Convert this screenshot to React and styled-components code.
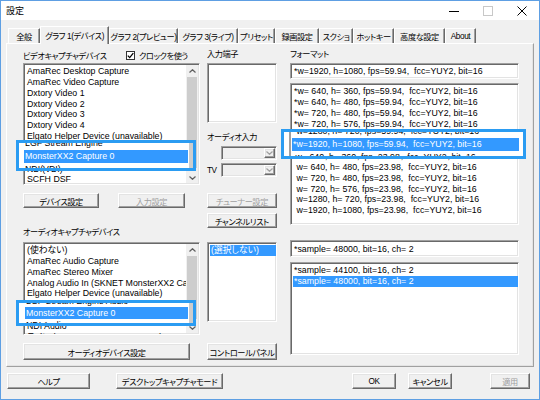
import React from "react"
import styled, { createGlobalStyle, css } from "styled-components"

const GlobalStyle = createGlobalStyle`
  html, body {
    margin: 0;
    padding: 0;
    background: #f0f0f0;
  }
  body {
    font-family: "Liberation Sans", "Noto Sans CJK JP", sans-serif;
    font-size: 8.8px;
    font-feature-settings: "palt";
    color: #000;
  }
  * {
    box-sizing: border-box;
  }
`

// Japanese UI captions are narrower than Noto's kana, so tighten them
const jp = css`
  font-size: 8.2px;
  letter-spacing: -0.4px;
`

const sunken = css`
  border: 1px solid;
  border-color: #a0a0a0 #ffffff #ffffff #a0a0a0;
  box-shadow: inset 1px 1px 0 #696969, inset -1px -1px 0 #e3e3e3;
`

const raised = css`
  border: 1px solid;
  border-color: #ffffff #696969 #696969 #ffffff;
  box-shadow: inset -1px -1px 0 #a0a0a0, inset 1px 1px 0 #e3e3e3;
  background: #f0f0f0;
`

const Window = styled.div`
  width: 540px;
  height: 400px;
  border: 1px solid #5e9fe3;
  background: #f0f0f0;
  display: flex;
  flex-direction: column;
  overflow: hidden;
`

const TitleBar = styled.div`
  height: 19px;
  flex: none;
  background: #fff;
  display: flex;
  align-items: center;
  padding-left: 5px;
`

const TitleText = styled.span`
  font-size: 9px;
`

const WinButtons = styled.div`
  margin-left: auto;
  display: flex;
  height: 100%;
`

const WinButton = styled.div`
  width: 34px;
  height: 100%;
  display: flex;
  align-items: center;
  justify-content: center;
`

const Body = styled.div`
  flex: 1;
  display: flex;
  flex-direction: column;
  padding-top: 6px;
`

const TabStrip = styled.div`
  height: 18px;
  margin-bottom: -1px;
  padding-left: 7px;
  display: flex;
  align-items: flex-end;
  position: relative;
  z-index: 1;
`

const Tab = styled.div`
  ${jp};
  width: ${(p) => p.$w}px;
  height: ${(p) => (p.$active ? 18 : 15)}px;
  margin-bottom: ${(p) => (p.$active ? 0 : 1)}px;
  padding-bottom: ${(p) => (p.$active ? 2 : 0)}px;
  display: flex;
  align-items: center;
  justify-content: center;
  white-space: nowrap;
  background: #f0f0f0;
  border-top: 1px solid #fff;
  border-left: 1px solid #fff;
  border-right: 1px solid #696969;
  box-shadow: inset -1px 0 0 #a0a0a0;
`

const Panel = styled.div`
  height: 324px;
  flex: none;
  margin: 0 5px;
  border: 1px solid;
  border-color: #fff #a0a0a0 #a0a0a0 #fff;
  box-shadow: inset -1px -1px 0 #e3e3e3;
  display: flex;
  padding: 5px 0 0 16px;
`

const Column = styled.div`
  width: ${(p) => p.$w}px;
  margin-left: ${(p) => p.$gap || 0}px;
  display: flex;
  flex-direction: column;
`

const Label = styled.div`
  ${jp};
  height: 12px;
  line-height: 12px;
  white-space: nowrap;
  margin-top: ${(p) => p.$mt || 0}px;
`

const LabelRow = styled.div`
  ${jp};
  height: 12px;
  display: grid;
  grid-template-columns: 103px auto;
  align-items: center;
  white-space: nowrap;
`

const CheckGroup = styled.div`
  display: flex;
  align-items: center;
  gap: 4px;
`

const CheckBox = styled.div`
  width: 9px;
  height: 9px;
  border: 1px solid #333;
  background: #fff;
  display: flex;
  align-items: center;
  justify-content: center;
`

const ListBox = styled.div`
  ${sunken};
  position: relative;
  height: ${(p) => p.$h}px;
  margin-top: ${(p) => p.$mt || 0}px;
  background: #fff;
  display: flex;
  flex: none;
`

const Rows = styled.div`
  flex: 1;
  min-width: 0;
  overflow: hidden;
  padding: 2px 0 0 2px;
`

const Row = styled.div`
  height: 10.85px;
  line-height: 10.85px;
  padding-left: 1px;
  white-space: pre;
  overflow: hidden;
  background: ${(p) => (p.$selected ? "#3399ff" : "transparent")};
  color: ${(p) => (p.$selected ? "#fff" : "#000")};
`

const Scrollbar = styled.div`
  width: 12px;
  margin: 1px 1px 1px 0;
  background: #f0f0f0;
  display: flex;
  flex-direction: column;
`

const ScrollArrow = styled.div`
  height: 11px;
  flex: none;
  display: flex;
  align-items: center;
  justify-content: center;
  margin-top: ${(p) => (p.$bottom ? "auto" : "0")};
`

const Thumb = styled.div`
  height: ${(p) => p.$h}px;
  margin: 1px 1px 0;
  background: #cdcdcd;
`

const EditBox = styled.div`
  ${sunken};
  height: ${(p) => p.$h}px;
  margin-top: ${(p) => p.$mt || 0}px;
  background: #fff;
  padding-left: 3px;
  display: flex;
  align-items: center;
  white-space: pre;
`

const Button = styled.div`
  ${raised};
  ${jp};
  width: ${(p) => p.$w}px;
  height: ${(p) => p.$h || 15}px;
  margin-top: ${(p) => p.$mt || 0}px;
  margin-left: ${(p) => p.$ml || 0}px;
  flex: none;
  display: flex;
  align-items: center;
  justify-content: center;
  white-space: nowrap;
  color: ${(p) => (p.$disabled ? "#a0a0a0" : "#000")};
`

const ButtonRow = styled.div`
  display: flex;
  gap: 19px;
  margin-top: 8px;
`

const Combo = styled.div`
  ${sunken};
  width: 56px;
  height: 14px;
  margin-left: ${(p) => p.$ml || 0}px;
  margin-top: ${(p) => p.$mt || 0}px;
  background: #f0f0f0;
  display: flex;
  justify-content: flex-end;
  padding: 1px;
`

const ComboDrop = styled.div`
  ${raised};
  width: 11px;
  height: 100%;
  display: flex;
  align-items: center;
  justify-content: center;
`

const TvRow = styled.div`
  display: flex;
  align-items: center;
  margin-top: 3px;
`

const TvLabel = styled.span`
  ${jp};
  width: 14px;
`

const CalloutFrame = styled.div`
  position: absolute;
  left: ${(p) => p.$x}px;
  top: ${(p) => p.$y}px;
  width: ${(p) => p.$w}px;
  height: ${(p) => p.$h}px;
  border: 3px solid #2b9cf2;
  background: #fff;
  overflow: hidden;
  display: flex;
  z-index: 2;
`

const CalloutRows = styled.div`
  flex: 1;
  min-width: 0;
  margin-top: ${(p) => p.$shift}px;
  margin-left: ${(p) => p.$ml || 0}px;
  padding-left: ${(p) => p.$pad}px;
  padding-right: ${(p) => p.$pr || 0}px;
  border-left: ${(p) => (p.$edge ? "2px solid #a0a0a0" : "none")};
`

const CalloutRow = styled.div`
  height: ${(p) => p.$h}px;
  line-height: ${(p) => p.$h}px;
  padding-left: 1px;
  white-space: pre;
  overflow: hidden;
  background: ${(p) => (p.$selected ? "#3399ff" : "transparent")};
  color: ${(p) => (p.$selected ? "#fff" : "#000")};
`

const CalloutBar = styled.div`
  width: 4px;
  margin-left: 1px;
  background: #cdcdcd;
`

const Footer = styled.div`
  display: flex;
  margin-top: 6px;
  padding: 0 9px 0 6px;
`

const Spacer = styled.div`
  flex: 1;
`

const Chevron = ({ down }) => (
  <svg width="7" height="4" viewBox="0 0 7 4">
    <path
      d={down ? "M0.5 0.5 L3.5 3.3 L6.5 0.5" : "M0.5 3.5 L3.5 0.7 L6.5 3.5"}
      fill="none"
      stroke="#606060"
      strokeWidth="1.2"
    />
  </svg>
)

const DropArrow = () => (
  <svg width="7" height="4" viewBox="0 0 7 4">
    <path d="M0.5 0.5 L3.5 3.3 L6.5 0.5" fill="none" stroke="#a0a0a0" strokeWidth="1.2" />
  </svg>
)

const VScroll = ({ thumb }) => (
  <Scrollbar>
    <ScrollArrow>
      <Chevron />
    </ScrollArrow>
    <Thumb $h={thumb} />
    <ScrollArrow $bottom>
      <Chevron down />
    </ScrollArrow>
  </Scrollbar>
)

const Callout = ({ x, y, w, h, shift, rowH, pad, pr, ml, edge, bar, rows, selected }) => (
  <CalloutFrame $x={x} $y={y} $w={w} $h={h}>
    <CalloutRows $shift={shift} $pad={pad} $pr={pr} $ml={ml} $edge={edge}>
      {rows.map((r, i) => (
        <CalloutRow key={i} $h={rowH} $selected={i === selected}>
          {r}
        </CalloutRow>
      ))}
    </CalloutRows>
    {bar && <CalloutBar />}
  </CalloutFrame>
)

const tabs = [
  { label: "全般", w: 32 },
  { label: "グラフ 1(デバイス)", w: 69, active: true },
  { label: "グラフ 2(プレビュー)", w: 69 },
  { label: "グラフ 3(ライブ)", w: 60 },
  { label: "プリセット", w: 37 },
  { label: "録画設定", w: 44 },
  { label: "スクショ", w: 34 },
  { label: "ホットキー", w: 41 },
  { label: "高度な設定", w: 51 },
  { label: "About", w: 31 },
]

const videoDevices = [
  "AmaRec Desktop Capture",
  "AmaRec Video Capture",
  "Dxtory Video 1",
  "Dxtory Video 2",
  "Dxtory Video 3",
  "Dxtory Video 4",
  "Elgato Helper Device (unavailable)",
  "LGF Stream Engine",
  "MonsterXX2 Capture 0",
  "NDI(VDI)",
  "SCFH DSF",
]

const audioDevices = [
  "(使わない)",
  "AmaRec Audio Capture",
  "AmaRec Stereo Mixer",
  "Analog Audio In (SKNET MonsterXX2 Capture 0)",
  "Elgato Helper Device (unavailable)",
  "LGF Stream Engine Audio",
  "MonsterXX2 Capture 0",
  "NDI Audio",
  "ライン (4- Game Capture HD 60 S)",
]

const videoFormats = [
  "*w= 640, h= 360, fps=59.94,  fcc=YUY2, bit=16",
  "*w= 640, h= 480, fps=59.94,  fcc=YUY2, bit=16",
  "*w= 720, h= 480, fps=59.94,  fcc=YUY2, bit=16",
  "*w= 720, h= 576, fps=59.94,  fcc=YUY2, bit=16",
  "*w=1280, h= 720, fps=59.94,  fcc=YUY2, bit=16",
  "*w=1920, h=1080, fps=59.94,  fcc=YUY2, bit=16",
  " w= 640, h= 360, fps=23.98,  fcc=YUY2, bit=16",
  " w= 640, h= 480, fps=23.98,  fcc=YUY2, bit=16",
  " w= 720, h= 480, fps=23.98,  fcc=YUY2, bit=16",
  " w= 720, h= 576, fps=23.98,  fcc=YUY2, bit=16",
  " w=1280, h= 720, fps=23.98,  fcc=YUY2, bit=16",
  " w=1920, h=1080, fps=23.98,  fcc=YUY2, bit=16",
]

const audioFormats = ["*sample= 44100, bit=16, ch= 2", "*sample= 48000, bit=16, ch= 2"]

const App = () => (
  <>
    <GlobalStyle />
    <Window>
      <TitleBar>
        <TitleText>設定</TitleText>
        <WinButtons>
          <WinButton>
            <svg width="10" height="10" viewBox="0 0 10 10">
              <path d="M0 5.5 H10" stroke="#000" strokeWidth="1" />
            </svg>
          </WinButton>
          <WinButton>
            <svg width="10" height="10" viewBox="0 0 10 10">
              <rect x="0.5" y="0.5" width="9" height="9" fill="none" stroke="#c8c8c8" />
            </svg>
          </WinButton>
          <WinButton>
            <svg width="10" height="10" viewBox="0 0 10 10">
              <path d="M0.5 0.5 L9.5 9.5 M9.5 0.5 L0.5 9.5" stroke="#000" strokeWidth="1" />
            </svg>
          </WinButton>
        </WinButtons>
      </TitleBar>
      <Body>
        <TabStrip>
          {tabs.map((t) => (
            <Tab key={t.label} $w={t.w} $active={t.active}>
              {t.label}
            </Tab>
          ))}
        </TabStrip>
        <Panel>
          <Column $w={177}>
            <LabelRow>
              <span>ビデオキャプチャデバイス</span>
              <CheckGroup>
                <CheckBox>
                  <svg width="7" height="7" viewBox="0 0 7 7">
                    <path d="M0.8 3.6 L2.7 5.6 L6.3 1.2" fill="none" stroke="#000" strokeWidth="1.3" />
                  </svg>
                </CheckBox>
                クロックを使う
              </CheckGroup>
            </LabelRow>
            <ListBox $h={122} $mt={2}>
              <Rows>
                {videoDevices.map((d, i) => (
                  <Row key={d} $selected={i === 8}>
                    {d}
                  </Row>
                ))}
              </Rows>
              <VScroll thumb={91} />
              <Callout
                x={-8}
                y={76}
                w={180}
                h={31}
                shift={-6}
                rowH={13}
                pad={5}
                bar
                rows={["LGF Stream Engine", "MonsterXX2 Capture 0", "NDI(VDI)"]}
                selected={1}
              />
            </ListBox>
            <ButtonRow>
              <Button $w={76}>デバイス設定</Button>
              <Button $w={67} $disabled>
                入力設定
              </Button>
            </ButtonRow>
            <Label $mt={19}>オーディオキャプチャデバイス</Label>
            <ListBox $h={93} $mt={3}>
              <Rows>
                {audioDevices.map((d, i) => (
                  <Row key={d} $selected={i === 6}>
                    {d}
                  </Row>
                ))}
              </Rows>
              <VScroll thumb={63} />
              <Callout
                x={-8}
                y={57}
                w={180}
                h={26}
                shift={-8}
                rowH={12}
                pad={6}
                bar
                rows={["LGF Stream Engine Audio", "MonsterXX2 Capture 0", "NDI Audio"]}
                selected={1}
              />
            </ListBox>
            <Button $w={167} $h={17} $mt={8}>
              オーディオデバイス設定
            </Button>
          </Column>

          <Column $w={70} $gap={7}>
            <Label>入力端子</Label>
            <ListBox $h={60} $mt={2} />
            <Label $mt={9}>オーディオ入力</Label>
            <Combo $ml={14} $mt={2}>
              <ComboDrop>
                <DropArrow />
              </ComboDrop>
            </Combo>
            <TvRow>
              <TvLabel>TV</TvLabel>
              <Combo>
                <ComboDrop>
                  <DropArrow />
                </ComboDrop>
              </Combo>
            </TvRow>
            <Button $w={70} $mt={16} $disabled>
              チューナー設定
            </Button>
            <Button $w={70} $mt={5}>
              チャンネルリスト
            </Button>
            <ListBox $h={80} $mt={14}>
              <Rows>
                <Row $selected>(選択しない)</Row>
              </Rows>
            </ListBox>
            <Button $w={70} $h={17} $mt={21}>
              コントロールパネル
            </Button>
          </Column>

          <Column $w={229} $gap={13}>
            <Label>フォーマット</Label>
            <EditBox $h={16} $mt={2}>
              *w=1920, h=1080, fps=59.94,  fcc=YUY2, bit=16
            </EditBox>
            <ListBox $h={142} $mt={4}>
              <Rows>
                {videoFormats.map((f, i) => (
                  <Row key={f} $selected={i === 5}>
                    {f}
                  </Row>
                ))}
              </Rows>
              <Callout
                x={-10}
                y={45}
                w={245}
                h={30}
                shift={-7}
                rowH={13}
                ml={5}
                pad={1}
                pr={4}
                edge
                rows={[videoFormats[4], videoFormats[5], videoFormats[6]]}
                selected={1}
              />
            </ListBox>
            <EditBox $h={17} $mt={15}>
              *sample= 48000, bit=16, ch= 2
            </EditBox>
            <ListBox $h={93} $mt={5}>
              <Rows>
                {audioFormats.map((f, i) => (
                  <Row key={f} $selected={i === 1}>
                    {f}
                  </Row>
                ))}
              </Rows>
            </ListBox>
          </Column>
        </Panel>
        <Footer>
          <Button $w={83} $h={16}>
            ヘルプ
          </Button>
          <Button $w={107} $h={16} $ml={26}>
            デスクトップキャプチャモード
          </Button>
          <Spacer />
          <Button $w={44} $h={16}>
            OK
          </Button>
          <Button $w={44} $h={16} $ml={12}>
            キャンセル
          </Button>
          <Button $w={40} $h={16} $ml={38} $disabled>
            適用
          </Button>
        </Footer>
      </Body>
    </Window>
  </>
)

export default App
